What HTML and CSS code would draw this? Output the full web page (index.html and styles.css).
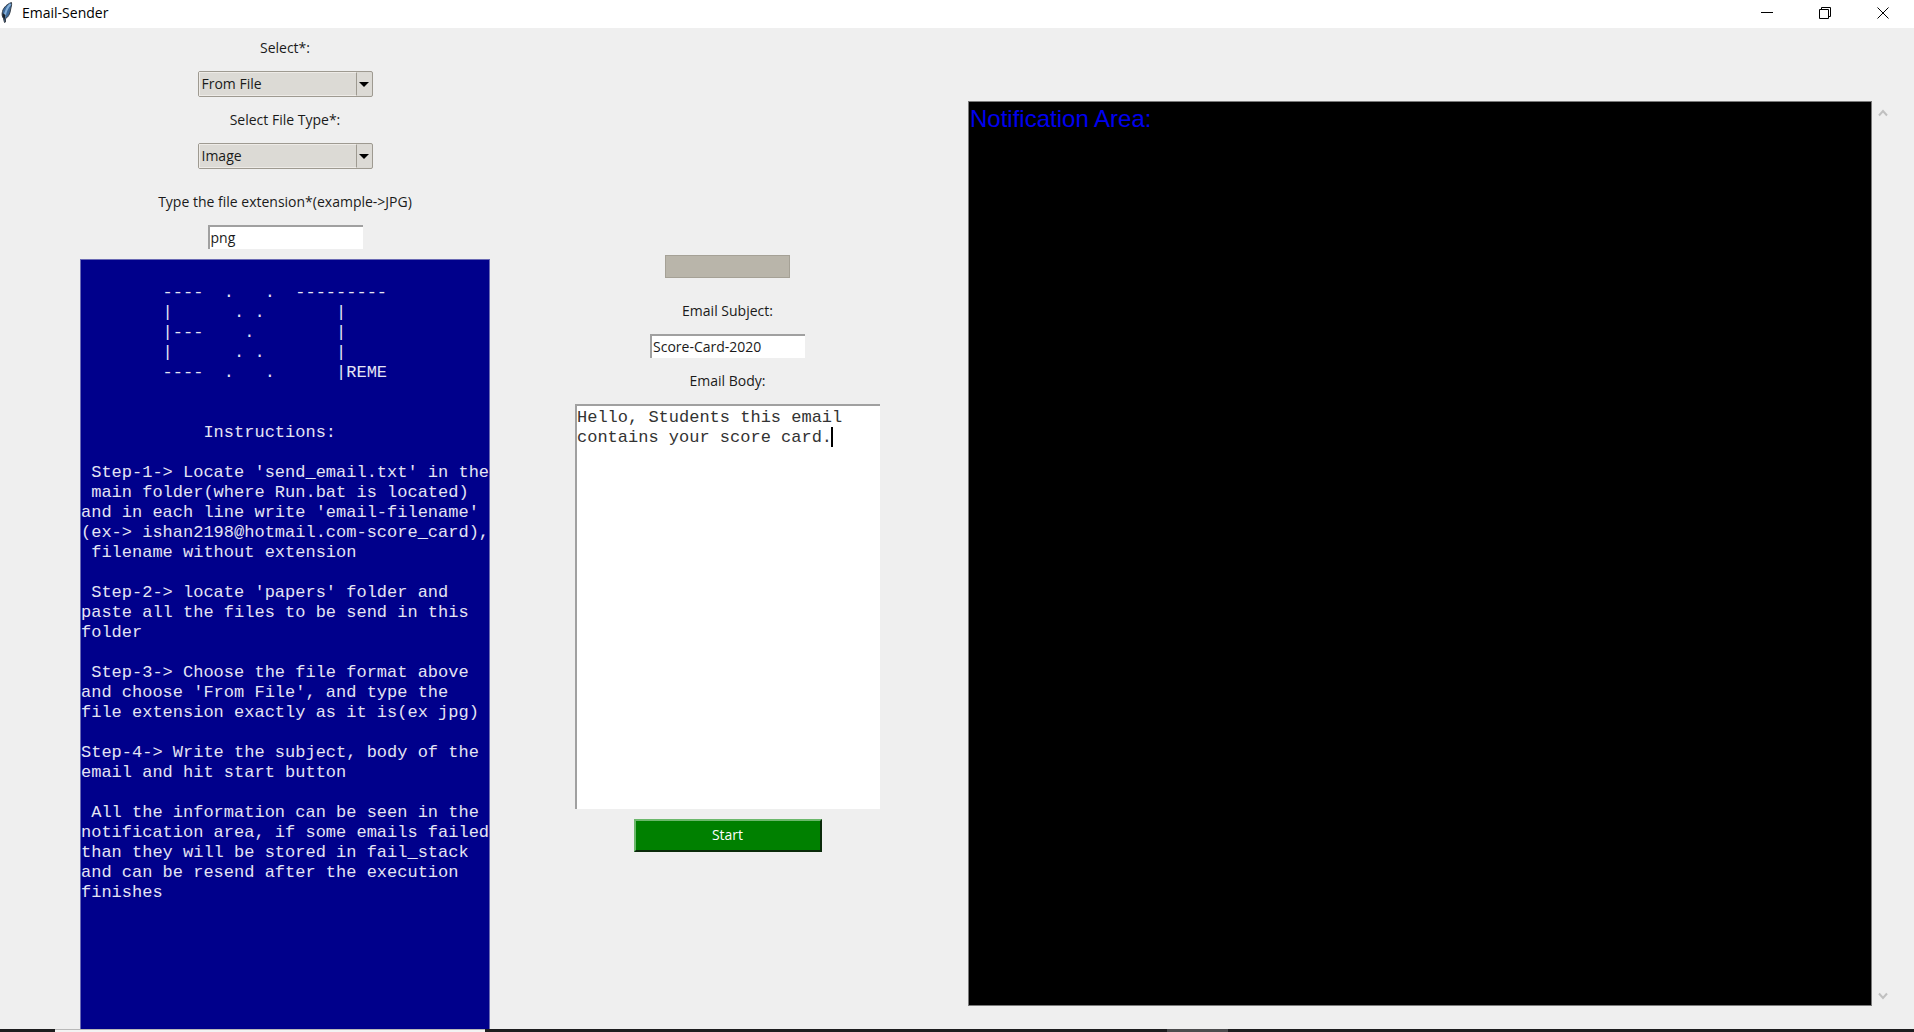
FILE: index.html
```html
<!DOCTYPE html>
<html lang="en">
<head>
<meta charset="utf-8">
<title>Email-Sender</title>
<link rel="stylesheet" href="styles.css">
</head>
<body>
<header class="titlebar">
  <svg class="feather" width="14" height="22" viewBox="0 0 14 22" aria-hidden="true">
    <path d="M11.500 0.500C8 1.500 3.500 5 2.500 9.500C1.800 12 2 14.500 3.500 16.500L4.500 20.500L5.500 20L5.500 16.500C8 15.500 10 12 10.500 8C11 5 12 3 11.500 0.500Z" fill="#3c6a9c" stroke="#3a4048" stroke-width="1"/>
    <path d="M10.500 2C7.500 5 5.500 9 4.500 15" fill="none" stroke="#86b0d8" stroke-width="2"/>
    <path d="M2.500 11L2.500 14L4.500 18L5.500 13Z" fill="#1c232b"/>
  </svg>
  <h1 class="title">Email-Sender</h1>
  <div class="window-buttons">
    <button class="window-button" type="button" aria-label="Minimize"><svg width="12" height="12" viewBox="0 0 12 12"><path d="M0 5.500H12"/></svg></button>
    <button class="window-button" type="button" aria-label="Restore"><svg width="12" height="12" viewBox="0 0 12 12"><path d="M0.500 2.500H9.500V11.500H0.500ZM2.500 2.500V0.500H11.500V9.500H9.500"/></svg></button>
    <button class="window-button" type="button" aria-label="Close"><svg width="12" height="12" viewBox="0 0 12 12"><path d="M0.500 0.500L11.500 11.500M11.500 0.500L0.500 11.500"/></svg></button>
  </div>
</header>
<main class="window">
  <section class="column source">
    <label class="label" for="source">Select*:</label>
    <div class="combo">
      <select class="select" id="source"><option>From File</option></select>
      <svg class="arrow" width="15" height="24" viewBox="0 0 15 24" aria-hidden="true"><path d="M2 10H12L7 15Z"/></svg>
    </div>
    <label class="label" for="filetype">Select File Type*:</label>
    <div class="combo">
      <select class="select" id="filetype"><option>Image</option></select>
      <svg class="arrow" width="15" height="24" viewBox="0 0 15 24" aria-hidden="true"><path d="M2 10H12L7 15Z"/></svg>
    </div>
    <label class="label label-extension" for="extension">Type the file extension*(example-&gt;JPG)</label>
    <input class="entry" id="extension" type="text" value="png">
    <pre class="instructions">

        ----  .   .  ---------
        |      . .       |
        |---    .        |
        |      . .       |
        ----  .   .      |REME


            Instructions:

 Step-1-&gt; Locate 'send_email.txt' in the
 main folder(where Run.bat is located)
and in each line write 'email-filename'
(ex-&gt; ishan2198@hotmail.com-score_card),
 filename without extension

 Step-2-&gt; locate 'papers' folder and
paste all the files to be send in this
folder

 Step-3-&gt; Choose the file format above
and choose 'From File', and type the
file extension exactly as it is(ex jpg)

Step-4-&gt; Write the subject, body of the
email and hit start button

 All the information can be seen in the
notification area, if some emails failed
than they will be stored in fail_stack
and can be resend after the execution
finishes</pre>
  </section>
  <section class="column message">
    <div class="progress" role="progressbar" aria-label="Sending progress"></div>
    <label class="label" for="subject">Email Subject:</label>
    <input class="entry" id="subject" type="text" value="Score-Card-2020">
    <label class="label" for="body">Email Body:</label>
    <div class="editor">
      <textarea class="body-text" id="body" spellcheck="false">Hello, Students this email
contains your score card.</textarea>
      <span class="caret"></span>
    </div>
    <button class="start" type="button">Start</button>
  </section>
  <section class="notifications">
    <textarea class="log" aria-label="Notifications" readonly>Notification Area:</textarea>
    <div class="scrollbar">
      <svg width="12" height="10" viewBox="0 0 12 10" aria-hidden="true"><path d="M2 7.500L6 3L10 7.500"/></svg>
      <svg width="12" height="10" viewBox="0 0 12 10" aria-hidden="true"><path d="M2 2.500L6 7L10 2.500"/></svg>
    </div>
  </section>
</main>
<footer class="taskbar">
  <div class="taskbar-search"></div>
  <div class="taskbar-app"></div>
</footer>
</body>
</html>
```
FILE: styles.css
```css
* {
  box-sizing: border-box;
}

body {
  margin: 0;
  height: 100vh;
  display: flex;
  flex-direction: column;
  overflow: hidden;
  background: #efefef;
  color: #1a1a1a;
  font: 14px/20px "Open Sans", "Noto Sans", sans-serif;
}

.titlebar {
  display: flex;
  align-items: center;
  height: 28px;
  flex: none;
  padding: 0 2px 2px 0;
  background: #fff;
}

.feather {
  margin-right: 8px;
}

.title {
  flex: 1;
  margin: 0;
  font-size: 14px;
  font-weight: 400;
  color: #000;
}

.window-buttons {
  display: flex;
}

.window-button {
  display: flex;
  align-items: center;
  justify-content: center;
  width: 58px;
  height: 26px;
  padding: 0;
  border: 0;
  background: none;
}

.window-button path {
  fill: none;
  stroke: #000;
}

.window {
  flex: 1;
  min-height: 0;
  display: grid;
  grid-template-columns: 570fr 315fr 1029fr;
  grid-template-rows: minmax(0, 1fr);
}

.column {
  display: flex;
  flex-direction: column;
  align-items: center;
}

.source {
  padding-top: 10px;
}

.label {
  margin-bottom: 13px;
}

.label-extension {
  margin-top: 10px;
}

.combo {
  display: flex;
  width: 175px;
  height: 26px;
  flex: none;
  margin-bottom: 13px;
  border: 1px solid #9e9a91;
  border-radius: 2px;
  background: #dcdad5;
}

.select {
  flex: 1;
  padding: 0 0 0 2px;
  appearance: none;
  border: 1px solid #eeebe7;
  border-right: 1px solid #9e9a91;
  border-radius: 0;
  background: #dcdad5;
  color: inherit;
  font: inherit;
}

.arrow {
  fill: #000;
}

.entry {
  width: 155px;
  height: 24px;
  flex: none;
  padding: 0 0 2px 1px;
  border: 0 solid #a0a0a0;
  border-width: 2px 0 0 2px;
  background: #fff;
  color: inherit;
  font: inherit;
}

.instructions {
  flex: 1;
  width: 410px;
  min-height: 0;
  margin: 10px 0 0;
  padding: 3px 0;
  border: solid #6a6ab4;
  border-width: 1px 1px 0;
  background: #00008b;
  color: #e4e4f4;
  font: 17px/20px "Liberation Mono", monospace;
}

.message {
  padding-top: 227px;
}

.progress {
  width: 125px;
  height: 23px;
  margin-bottom: 23px;
  border: 1px solid #a5a196;
  background: #b9b5aa;
}

.message .entry {
  margin-bottom: 13px;
}

.editor {
  position: relative;
  width: 305px;
  height: 405px;
  margin-bottom: 10px;
}

.body-text {
  display: block;
  width: 100%;
  height: 100%;
  padding: 2px 0;
  resize: none;
  border: 0 solid #a0a0a0;
  border-width: 2px 0 0 2px;
  background: #fff;
  color: #333;
  font: 17px/20px "Liberation Mono", monospace;
}

.caret {
  position: absolute;
  left: 256px;
  top: 23px;
  width: 2px;
  height: 20px;
  background: #000;
}

.start {
  width: 188px;
  height: 33px;
  padding: 0 0 2px;
  border: 2px solid;
  border-color: #6cb86c #0a2a0a #0a2a0a #6cb86c;
  background: #008000;
  color: #fff;
  font: inherit;
}

.notifications {
  display: flex;
  padding: 73px 21px 23px 83px;
}

.log {
  flex: 1;
  padding: 3px 1px;
  resize: none;
  border: 1px solid #7a7a7a;
  background: #000;
  color: #0000f0;
  font: 24px/28px "Liberation Sans", Arial, sans-serif;
}

.scrollbar {
  display: flex;
  flex-direction: column;
  align-items: center;
  justify-content: space-between;
  width: 21px;
  padding: 7px 0 5px 1px;
}

.scrollbar path {
  fill: none;
  stroke: #c0c0c0;
  stroke-width: 2;
}

.taskbar {
  display: grid;
  grid-template-columns: 55fr 430fr 682fr 61fr 686fr;
  height: 3px;
  flex: none;
  background: #1c1c1e;
}

.taskbar-search {
  grid-column: 2;
  border-top: 1px solid #b8b8b8;
  background: #f3f3f3;
}

.taskbar-app {
  grid-column: 4;
  background: #4c4c4e;
}
```
